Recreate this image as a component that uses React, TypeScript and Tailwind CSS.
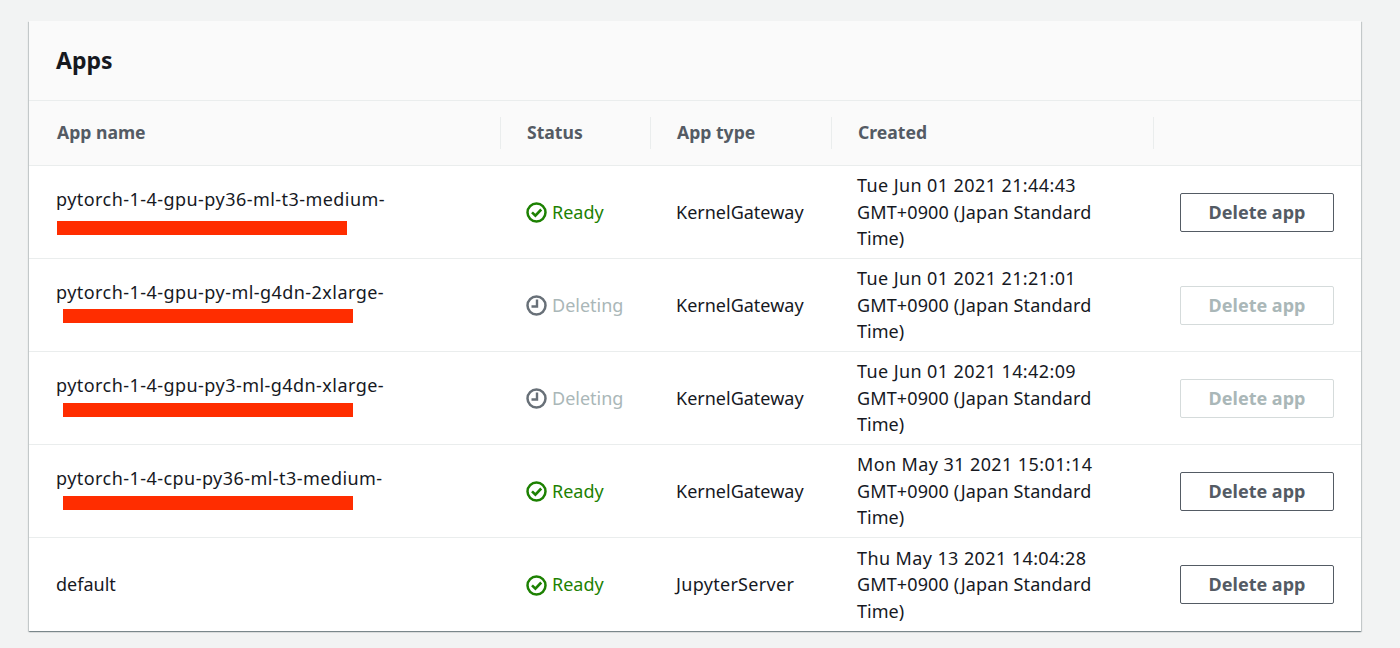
const font = { fontFamily: '"Noto Sans", sans-serif' };

type App = {
  name: string;
  bar?: string;
  status: 'ready' | 'deleting';
  type: string;
  created: string;
};

const apps: App[] = [
  { name: 'pytorch-1-4-gpu-py36-ml-t3-medium-', bar: 'ml-px mt-[8px] mb-[3px]', status: 'ready', type: 'KernelGateway', created: 'Tue Jun 01 2021 21:44:43' },
  { name: 'pytorch-1-4-gpu-py-ml-g4dn-2xlarge-', bar: 'ml-[7px] mt-[3px] mb-[8px]', status: 'deleting', type: 'KernelGateway', created: 'Tue Jun 01 2021 21:21:01' },
  { name: 'pytorch-1-4-gpu-py3-ml-g4dn-xlarge-', bar: 'ml-[7px] mt-[4px] mb-[7px]', status: 'deleting', type: 'KernelGateway', created: 'Tue Jun 01 2021 14:42:09' },
  { name: 'pytorch-1-4-cpu-py36-ml-t3-medium-', bar: 'ml-[7px] mt-[4px] mb-[7px]', status: 'ready', type: 'KernelGateway', created: 'Mon May 31 2021 15:01:14' },
  { name: 'default', status: 'ready', type: 'JupyterServer', created: 'Thu May 13 2021 14:04:28' },
];

const CheckIcon = () => (
  <svg width="21" height="21" viewBox="0 0 21 21" fill="none" stroke="#1d8102" strokeWidth="2.5">
    <circle cx="10.5" cy="10.5" r="9" />
    <path d="M6 10.3l3.4 3.4 5.8-6.2" strokeWidth="2.6" />
  </svg>
);

const ClockIcon = () => (
  <svg width="21" height="21" viewBox="0 0 21 21" fill="none" stroke="#687078" strokeWidth="2.5">
    <circle cx="10.5" cy="10.5" r="9" />
    <path d="M11 4.5v7H5.5" strokeWidth="2.4" />
  </svg>
);

const columnHead = (label: string, cls: string) => (
  <div className={`flex h-8 items-center border-r border-[#eaeded] ${cls}`}>
    <span className="pb-px text-[17.6px] font-bold text-[#545b64]">{label}</span>
  </div>
);

export default function App() {
  return (
    <div className="min-h-[648px] bg-[#f2f3f3] px-[29px] pt-[21px]" style={font}>
      <div className="w-[1332px] bg-white shadow-[0_1px_1px_0_rgba(0,28,36,0.3),1px_1px_1px_0_rgba(0,28,36,0.15),-1px_1px_1px_0_rgba(0,28,36,0.15)]">
        <div className="flex h-[80px] items-center border-b border-[#eaeded] bg-[#fafafa] pb-px pl-[27px]">
          <h2 className="text-[23px] font-bold leading-none text-[#16191f]">Apps</h2>
        </div>
        <div className="grid h-[65px] grid-cols-[472px_150px_181px_322px_1fr] items-center border-b border-[#eaeded] bg-[#fafafa]">
          {columnHead('App name', 'pl-[28px]')}
          {columnHead('Status', 'pl-[26px]')}
          {columnHead('App type', 'pl-[26px]')}
          {columnHead('Created', 'pl-[26px]')}
          <div />
        </div>
        {apps.map((app, i) => (
          <div
            key={app.created}
            className={`grid h-[93px] grid-cols-[472px_150px_181px_322px_1fr] items-center text-[18px] leading-[26.6px] text-[#16191f] ${i < apps.length - 1 ? 'border-b border-[#eaeded]' : ''}`}
          >
            <div className="pl-[27px]">
              <div className={app.bar ? 'tracking-[0.45px]' : ''}>{app.name}</div>
              {app.bar && <div className={`h-[14px] w-[290px] bg-[#ff2d00] ${app.bar}`} />}
            </div>
            <div className="flex items-center gap-[5px] pl-[25px]">
              <span className="pt-px">{app.status === 'ready' ? <CheckIcon /> : <ClockIcon />}</span>
              <span className={app.status === 'ready' ? 'text-[#1d8102]' : 'text-[#aab7b8]'}>
                {app.status === 'ready' ? 'Ready' : 'Deleting'}
              </span>
            </div>
            <div className={`pl-[25px] ${app.bar ? '' : 'tracking-[0.3px]'}`}>{app.type}</div>
            <div className="pl-[25px]">
              <div className="tracking-[0.4px]">{app.created}</div>
              <div className="tracking-[0.12px]">GMT+0900 (Japan Standard</div>
              <div>Time)</div>
            </div>
            <div className={`pl-[26px] ${i < apps.length - 1 ? 'pt-px' : ''}`}>
              <button
                disabled={app.status === 'deleting'}
                className={`h-[39px] w-[154px] rounded-[2px] border text-[18px] font-bold ${app.status === 'deleting' ? 'border-[#d5dbdb] text-[#aab7b8]' : 'border-[#545b64] text-[#545b64]'}`}
              >
                Delete app
              </button>
            </div>
          </div>
        ))}
      </div>
    </div>
  );
}
